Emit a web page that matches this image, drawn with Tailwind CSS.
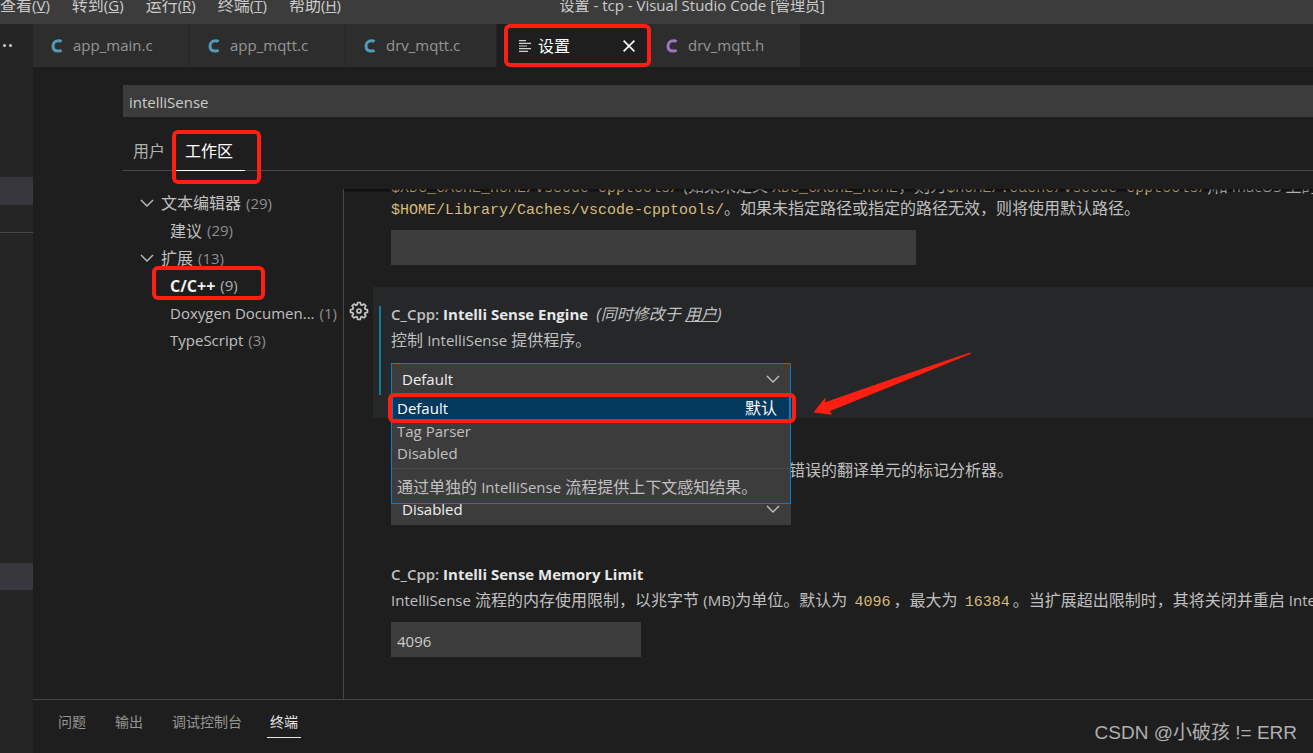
<!DOCTYPE html>
<html lang="zh-CN">
<head>
<meta charset="utf-8">
<meta name="viewport" content="width=device-width, initial-scale=1">
<title>设置 - tcp - Visual Studio Code</title>
<script src="https://cdn.jsdelivr.net/npm/@tailwindcss/browser@4"></script>
</head>
<body class="relative flex h-screen flex-col overflow-hidden bg-[#1e1e1e] font-['Open_Sans','Noto_Sans_CJK_SC',sans-serif] text-[16px] text-[#c0c0c0]">
<svg class="hidden" aria-hidden="true">
  <symbol id="c" viewBox="0 0 12 14"><path d="M10.6 2.5A5 5 0 0 0 7.4 1.8C4.2 1.8 2 3.9 2 7s2 5.1 5.2 5.1a6 6 0 0 0 3.4-.8" fill="none" stroke="currentColor" stroke-width="3"/></symbol>
  <symbol id="chev" viewBox="0 0 14 8"><path d="M1 1l6 6 6-6" fill="none" stroke="currentColor" stroke-width="1.4"/></symbol>
</svg>

<header class="relative flex h-6 shrink-0 items-start bg-[#3c3c3c] text-[#cccccc]">
  <nav class="flex gap-[22px] whitespace-nowrap">
    <button class="leading-[10px]">查看<span class="text-[15px]">(<u>V</u>)</span></button>
    <button class="leading-[10px]">转到<span class="text-[15px]">(<u>G</u>)</span></button>
    <button class="leading-[10px]">运行<span class="text-[15px]">(<u>R</u>)</span></button>
    <button class="leading-[10px]">终端<span class="text-[15px]">(<u>T</u>)</span></button>
    <button class="leading-[10px]">帮助<span class="text-[15px]">(<u>H</u>)</span></button>
  </nav>
  <h1 class="ml-auto mr-[488px] text-[15px] leading-[10px] whitespace-nowrap">设置 - tcp - Visual Studio Code [管理员]</h1>
</header>

<div class="flex min-h-0 flex-1">
  <aside class="flex w-[33px] shrink-0 flex-col bg-[#252526]">
    <button aria-label="更多" class="flex h-[43px] items-center gap-[3px] pl-[3px]"><i class="size-[3px] rounded-full bg-[#cccccc]"></i><i class="size-[3px] rounded-full bg-[#cccccc]"></i></button>
    <div class="mt-[110px] h-7 bg-[#37373d]"></div>
    <div class="mt-[27px] border-t border-[#474747]"></div>
    <div class="mt-[330px] h-[27px] bg-[#37373d]"></div>
  </aside>

  <main class="flex min-w-0 flex-1 flex-col">
    <div class="flex h-[43px] shrink-0 bg-[#252526] text-[15px] text-[#969696]">
      <button class="flex w-[157px] items-center gap-[10px] border-r border-[#252526] bg-[#2d2d2d] pl-[18px]"><svg class="h-[14px] w-3 text-[#519aba]"><use href="#c"/></svg>app_main.c</button>
      <button class="flex w-[156px] items-center gap-[10px] border-r border-[#252526] bg-[#2d2d2d] pl-[18px]"><svg class="h-[14px] w-3 text-[#519aba]"><use href="#c"/></svg>app_mqtt.c</button>
      <button class="flex w-[151px] items-center gap-[10px] border-r border-[#252526] bg-[#2d2d2d] pl-[18px]"><svg class="h-[14px] w-3 text-[#519aba]"><use href="#c"/></svg>drv_mqtt.c</button>
      <div class="relative flex w-[151px] items-center bg-[#1e1e1e] pl-[22px] text-[16px] text-white">
        <svg class="mr-[7px] h-3 w-3" viewBox="0 0 12 12" stroke="#d0d0d0" stroke-width="1.2" aria-hidden="true"><path d="M0 .6h7M0 3.3h12M0 6h8M0 8.7h12M0 11.4h9"/></svg>
        <span>设置</span>
        <button aria-label="关闭" class="mr-[13px] ml-auto"><svg class="size-3" viewBox="0 0 12 12" stroke="#fff" stroke-width="1.6"><path d="M.6.6l10.8 10.8M11.4.6L.6 11.4"/></svg></button>
        <div class="absolute inset-y-0 -right-[3px] left-[7px] z-10 rounded-md border-4 border-[#ff1e12]"></div>
      </div>
      <button class="flex w-[152px] items-center gap-[10px] bg-[#2d2d2d] pl-[18px]"><svg class="h-[14px] w-3 text-[#a074c4]"><use href="#c"/></svg>drv_mqtt.h</button>
    </div>

    <div class="flex min-h-0 flex-1 flex-col pl-[90px]">
      <input aria-label="搜索设置" value="intelliSense" class="mt-[18px] h-8 w-full shrink-0 bg-[#3c3c3c] px-[6px] pt-px text-[15px] text-[#cccccc] outline-none">
      <div class="mt-[15px] flex h-[39px] shrink-0 gap-[11px] border-b border-[#474747] pl-[10px]">
        <button class="text-[#b0b0b0]">用户</button>
        <div class="relative -mb-px flex w-[69px] border-b border-white">
          <button class="pl-[9px] text-white">工作区</button>
          <div class="absolute -top-0.5 -right-4 -bottom-3.5 -left-1 z-10 rounded-md border-4 border-[#ff1e12]"></div>
        </div>
      </div>

      <div class="mt-[18px] flex min-h-0 flex-1">
        <ul class="w-[221px] shrink-0 border-r border-[#474747] whitespace-nowrap">
          <li class="flex h-7 items-center pl-[17px]"><svg class="mr-[7px] h-2 w-[14px]"><use href="#chev"/></svg>文本编辑器<span class="ml-[5px] text-[15px] text-[#8e8e8e]">(29)</span></li>
          <li class="flex h-[27px] items-center pl-[47px]">建议<span class="ml-[5px] text-[15px] text-[#8e8e8e]">(29)</span></li>
          <li class="flex h-7 items-center pl-[17px]"><svg class="mr-[7px] h-2 w-[14px]"><use href="#chev"/></svg>扩展<span class="ml-[5px] text-[15px] text-[#8e8e8e]">(13)</span></li>
          <li class="relative flex h-[27px] items-center pl-[47px] text-[15px]"><b class="text-[16px] text-[#f0f0f0]">C/C++</b><span class="ml-[5px] text-[#b0b0b0]">(9)</span>
            <div class="absolute -top-1.5 right-[78px] -bottom-px left-[29px] z-10 rounded-md border-4 border-[#ff1e12]"></div></li>
          <li class="flex h-7 items-center pl-[47px] text-[15px]">Doxygen Documen...<span class="ml-[5px] text-[#8e8e8e]">(1)</span></li>
          <li class="flex h-[27px] items-center pl-[47px] text-[15px]">TypeScript<span class="ml-[5px] text-[#8e8e8e]">(3)</span></li>
        </ul>

        <div class="relative min-w-0 flex-1 overflow-hidden whitespace-nowrap">
          <div class="absolute inset-x-0 top-0 z-10 h-1 bg-gradient-to-b from-black/60 to-transparent"></div>
          <section class="-mt-[14px] h-[112px] pl-[47px]">
            <p class="h-[22px] leading-[22px]"><code class="font-['Liberation_Mono',monospace] text-[15px] text-[#d7ba7d]">$XDG_CACHE_HOME/vscode-cpptools/</code> (如果未定义 <code class="font-['Liberation_Mono',monospace] text-[15px] text-[#d7ba7d]">XDG_CACHE_HOME</code>，则为<code class="font-['Liberation_Mono',monospace] text-[15px] text-[#d7ba7d]">$HOME/.cache/vscode-cpptools/</code>)和 <span class="text-[15px]">macOS</span> 上的</p>
            <p class="h-[22px] leading-[22px]"><code class="font-['Liberation_Mono',monospace] text-[15px] text-[#d7ba7d]">$HOME/Library/Caches/vscode-cpptools/</code>。如果未指定路径或指定的路径无效，则将使用默认路径。</p>
            <input aria-label="缓存路径" class="mt-[11px] block h-[35px] w-[525px] bg-[#3c3c3c] px-[6px] outline-none">
          </section>

          <section class="flex h-[131px]">
            <button aria-label="更多操作" class="w-[29px] shrink-0 self-start pt-[14px] pl-[5px]"><svg class="size-5" viewBox="0 0 20 20" fill="none" stroke="#c5c5c5" stroke-width="1.7" stroke-linejoin="round"><path d="M8.7 1.5h2.6l.5 2.3 1.2.5 2-1.3 1.9 1.9-1.3 2 .5 1.2 2.4.6v2.6l-2.4.5-.5 1.2 1.3 2-1.9 1.9-2-1.3-1.2.5-.5 2.4H8.7l-.5-2.4-1.2-.5-2 1.3-1.9-1.9 1.3-2-.5-1.2-2.4-.5V8.7l2.4-.6.5-1.2-1.3-2L5 3l2 1.3 1.2-.5z"/><circle cx="10" cy="10" r="2"/></svg></button>
            <div class="flex flex-1 bg-[#252729] pt-[14px] pl-[6px]">
                <div class="mt-[5px] h-[89px] w-0.5 shrink-0 bg-[#0c7d9d]"></div>
                <div class="pl-[10px]">
                  <h2 class="flex h-[26px] items-center text-[15px]"><label for="engine" class="font-bold"><span class="font-semibold">C_Cpp: </span><span class="text-[#e7e7e7]">Intelli Sense Engine</span></label><em class="ml-2 text-[16px]">(同时修改于 <a href="#" class="underline">用户</a>)</em></h2>
                  <p class="h-[26px] leading-[26px]">控制 <span class="text-[15px]">IntelliSense</span> 提供程序。</p>
                  <div class="relative mt-[10px] w-[400px]">
                    <select id="engine" class="block h-[33px] w-full appearance-none border border-[#007fd4] bg-[#3c3c3c] px-[10px] text-[15px] text-[#f0f0f0] outline-none"><option>Default</option></select>
                    <svg class="pointer-events-none absolute top-3 right-[11px] h-2 w-[14px]"><use href="#chev"/></svg>
                    <div class="absolute inset-x-0 top-[33px] z-20 border border-t-0 border-[#007fd4] bg-[#3c3c3c]">
                      <div role="listbox" aria-label="Intelli Sense Engine" class="relative pb-1 text-[15px]">
                        <button role="option" aria-selected="true" class="flex h-6 w-full items-center justify-between border border-[#007fd4] bg-[#04395e] pr-3 pl-1 text-white">Default<span class="text-[16px]">默认</span></button>
                        <button role="option" aria-selected="false" class="block h-[22px] w-full pl-[5px] text-left leading-[22px]">Tag Parser</button>
                        <button role="option" aria-selected="false" class="block h-[22px] w-full pl-[5px] text-left leading-[22px]">Disabled</button>
                        <div class="absolute -top-[3px] -right-[6px] -left-1 h-[30px] rounded-md border-4 border-[#ff1e12]"></div>
                      </div>
                      <p class="h-[35px] border-t border-[#484848] pl-[5px] leading-9">通过单独的 <span class="text-[15px]">IntelliSense</span> 流程提供上下文感知结果。</p>
                    </div>
                    <svg class="absolute -top-3 left-[421px] z-20 h-[64px] w-[160px]" viewBox="812 351 160 64" fill="#ff1e12" aria-hidden="true"><path d="M813.5 412.5L825.5 397.2L825.2 402.3Q900 376 970 352.6L971 353.8Q900 383 829.5 411.2L832.3 414.8Z"/></svg>
                  </div>
                </div>
            </div>
          </section>

          <section class="h-[130px] pl-[47px]">
            <p class="pt-[39px] pl-[398px] leading-[26px]">错误的翻译单元的标记分析器。</p>
            <div class="relative mt-[10px] w-[400px]">
              <select aria-label="Intelli Sense Engine Fallback" class="block h-8 w-full appearance-none bg-[#3c3c3c] px-[11px] text-[15px] text-[#f0f0f0] outline-none"><option>Disabled</option></select>
              <svg class="pointer-events-none absolute top-3 right-[11px] h-2 w-[14px]"><use href="#chev"/></svg>
            </div>
          </section>

          <section class="pt-[13px] pl-[47px]">
            <h2 class="flex h-[26px] items-center text-[15px] font-bold"><label for="memory"><span class="font-semibold">C_Cpp: </span><span class="text-[#e7e7e7]">Intelli Sense Memory Limit</span></label></h2>
            <p class="h-[26px] leading-[26px]"><span class="text-[15px]">IntelliSense</span> 流程的内存使用限制，以兆字节 <span class="text-[15px]">(MB)</span>为单位。默认为 <code class="mx-[3px] font-['Liberation_Mono',monospace] text-[15px] text-[#d7ba7d]">4096</code>，最大为 <code class="mx-[3px] font-['Liberation_Mono',monospace] text-[15px] text-[#d7ba7d]">16384</code>。当扩展超出限制时，其将关闭并重启 <span class="text-[15px]">IntelliSense</span></p>
            <input id="memory" value="4096" class="mt-[9px] block h-[35px] w-[250px] bg-[#3c3c3c] px-[6px] pt-[3px] text-[15px] text-[#cccccc] outline-none">
          </section>
        </div>
      </div>
    </div>

    <footer class="flex h-[54px] shrink-0 items-start gap-[21px] border-t border-[#474747] pt-2 pl-[21px] text-[14px] text-[#969696]">
      <button class="h-[30px] px-1 pb-[3px]">问题</button>
      <button class="h-[30px] px-1 pb-[3px]">输出</button>
      <button class="h-[30px] px-1 pb-[3px]">调试控制台</button>
      <button class="h-[30px] border-b border-[#e7e7e7] px-[3px] pb-[3px] text-[#e7e7e7]">终端</button>
    </footer>
  </main>
</div>
<p class="absolute right-4 bottom-1.5 font-['Liberation_Sans','Noto_Sans_CJK_SC',sans-serif] text-[19px] leading-7 text-[#b0b0b0]">CSDN @小破孩 != ERR</p>
</body>
</html>
